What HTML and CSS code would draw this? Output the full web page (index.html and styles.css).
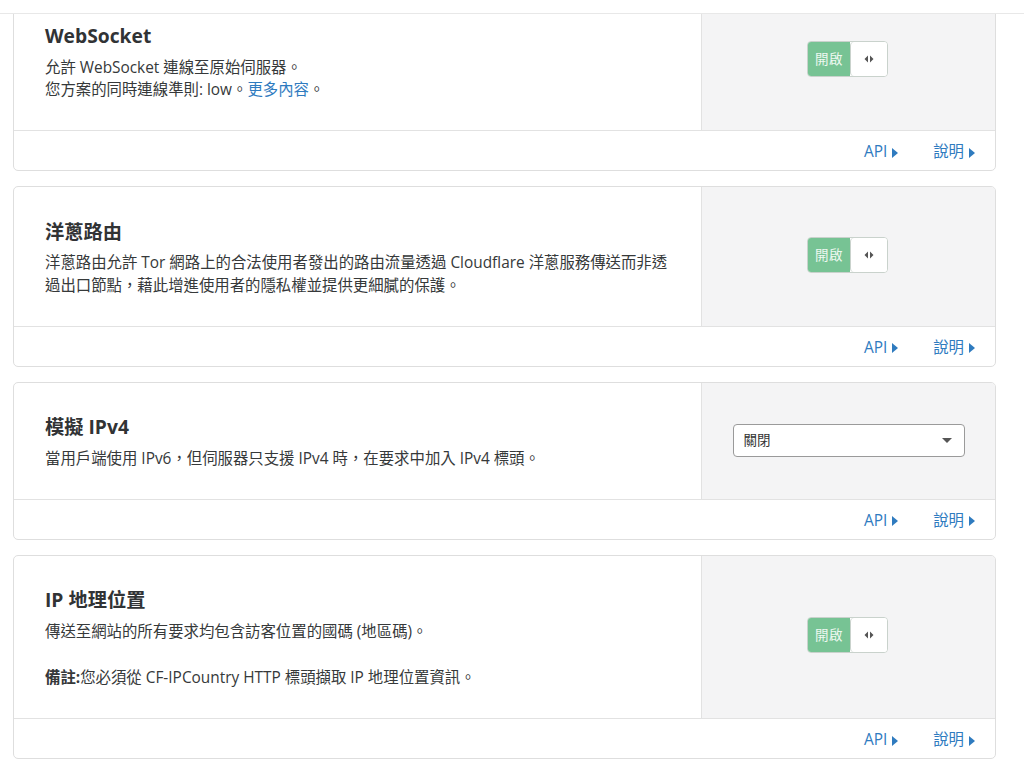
FILE: index.html
```html
<!DOCTYPE html>
<html lang="zh-Hant">
<head>
<meta charset="utf-8">
<title>網路設定</title>
<link rel="stylesheet" href="styles.css">
</head>
<body>
<header class="topbar"></header>
<main class="settings">
  <section class="card">
    <div class="card-body">
      <div class="card-main">
        <h3 class="card-title">WebSocket</h3>
        <p class="card-text">允許 WebSocket 連線至原始伺服器。<br>您方案的同時連線準則: low。<a class="link" href="#">更多內容</a>。</p>
      </div>
      <div class="card-control">
        <div class="toggle"><span class="toggle-on">開啟</span><span class="toggle-handle"><svg width="10" height="8" viewBox="0 0 10 8"><path d="M4 0.5 L0.5 4 L4 7.5 Z M6 0.5 L9.5 4 L6 7.5 Z" fill="#555"/></svg></span></div>
      </div>
    </div>
    <div class="card-footer">
      <a class="footer-link" href="#">API<span class="tri"></span></a>
      <a class="footer-link" href="#">說明<span class="tri"></span></a>
    </div>
  </section>

  <section class="card">
    <div class="card-body">
      <div class="card-main">
        <h3 class="card-title">洋蔥路由</h3>
        <p class="card-text">洋蔥路由允許 Tor 網路上的合法使用者發出的路由流量透過 Cloudflare 洋蔥服務傳送而非透過出口節點，藉此增進使用者的隱私權並提供更細膩的保護。</p>
      </div>
      <div class="card-control">
        <div class="toggle"><span class="toggle-on">開啟</span><span class="toggle-handle"><svg width="10" height="8" viewBox="0 0 10 8"><path d="M4 0.5 L0.5 4 L4 7.5 Z M6 0.5 L9.5 4 L6 7.5 Z" fill="#555"/></svg></span></div>
      </div>
    </div>
    <div class="card-footer">
      <a class="footer-link" href="#">API<span class="tri"></span></a>
      <a class="footer-link" href="#">說明<span class="tri"></span></a>
    </div>
  </section>

  <section class="card">
    <div class="card-body">
      <div class="card-main">
        <h3 class="card-title">模擬 IPv4</h3>
        <p class="card-text">當用戶端使用 IPv6，但伺服器只支援 IPv4 時，在要求中加入 IPv4 標頭。</p>
      </div>
      <div class="card-control">
        <div class="select"><span>關閉</span><span class="caret"></span></div>
      </div>
    </div>
    <div class="card-footer">
      <a class="footer-link" href="#">API<span class="tri"></span></a>
      <a class="footer-link" href="#">說明<span class="tri"></span></a>
    </div>
  </section>

  <section class="card">
    <div class="card-body">
      <div class="card-main">
        <h3 class="card-title">IP 地理位置</h3>
        <p class="card-text">傳送至網站的所有要求均包含訪客位置的國碼 (地區碼)。</p>
        <p class="card-text card-note"><strong>備註:</strong>您必須從 CF-IPCountry HTTP 標頭擷取 IP 地理位置資訊。</p>
      </div>
      <div class="card-control">
        <div class="toggle"><span class="toggle-on">開啟</span><span class="toggle-handle"><svg width="10" height="8" viewBox="0 0 10 8"><path d="M4 0.5 L0.5 4 L4 7.5 Z M6 0.5 L9.5 4 L6 7.5 Z" fill="#555"/></svg></span></div>
      </div>
    </div>
    <div class="card-footer">
      <a class="footer-link" href="#">API<span class="tri"></span></a>
      <a class="footer-link" href="#">說明<span class="tri"></span></a>
    </div>
  </section>
</main>
</body>
</html>
```
FILE: styles.css
```css
* { box-sizing: border-box; }

html, body {
  margin: 0;
  padding: 0;
  background: #ffffff;
  overflow: hidden;
}

body {
  font-family: "Open Sans", "Noto Sans CJK TC", sans-serif;
  font-size: 15.4px;
  line-height: 22.5px;
  color: #36393a;
}

.topbar {
  position: fixed;
  top: 0;
  left: 0;
  right: 0;
  height: 14px;
  background: #ffffff;
  border-bottom: 1px solid #e8e8e8;
  z-index: 5;
}

.settings {
  width: 983px;
  margin-left: 13px;
  margin-top: -9.5px;
}

.card {
  border: 1px solid #dedede;
  border-radius: 5px;
  margin-bottom: 15px;
  background: #ffffff;
  overflow: hidden;
}

.card-body {
  display: flex;
}

.card-main {
  flex: 1;
  padding: 31.5px 32px 28.5px 31px;
}

.card-title {
  margin: 0 0 8px 0;
  font-size: 19.25px;
  line-height: 25.5px;
  font-weight: 700;
  color: #313335;
}

.card-text {
  margin: 0;
  font-size: 15.4px;
  line-height: 22.5px;
}

.card-note { margin-top: 24px; }

.card-note strong { font-weight: 700; }

.link {
  color: #2f7bbf;
  text-decoration: none;
}

.card-control {
  width: 294px;
  flex: none;
  background: #f4f4f5;
  border-left: 1px solid #e2e2e2;
  display: flex;
  align-items: center;
  justify-content: center;
}

.toggle {
  display: flex;
  height: 36px;
  width: 81px;
  border-radius: 4px;
  border: 1px solid #c9d2cc;
  overflow: hidden;
  background: #ffffff;
  margin-top: -3px;
  margin-right: 2px;
}

.toggle-on {
  width: 42px;
  background: #77c394;
  color: #eef8f1;
  font-size: 13.5px;
  letter-spacing: 0.5px;
  display: flex;
  align-items: center;
  justify-content: center;
}

.toggle-handle {
  flex: 1;
  display: flex;
  align-items: center;
  justify-content: center;
  background: #ffffff;
  border-left: 1px solid #c9d2cc;
  border-radius: 4px 0 0 4px;
}

.select {
  width: 232px;
  height: 33px;
  border: 1px solid #9a9a9a;
  border-radius: 4px;
  background: #ffffff;
  display: flex;
  align-items: center;
  justify-content: space-between;
  padding: 0 12px 0 10px;
  font-size: 13.5px;
  color: #333;
}

.caret {
  width: 0;
  height: 0;
  border-left: 5px solid transparent;
  border-right: 5px solid transparent;
  border-top: 5px solid #555;
}

.card-footer {
  border-top: 1px solid #e2e2e2;
  height: 40px;
  display: flex;
  align-items: center;
  justify-content: flex-end;
  gap: 35px;
  padding: 4px 20px 0 0;
}

.footer-link {
  display: flex;
  align-items: center;
  color: #2f7bbf;
  text-decoration: none;
  font-size: 15.4px;
}

.tri {
  width: 0;
  height: 0;
  margin-left: 5px;
  border-top: 5px solid transparent;
  border-bottom: 5px solid transparent;
  border-left: 6px solid #2f7bbf;
}
```
